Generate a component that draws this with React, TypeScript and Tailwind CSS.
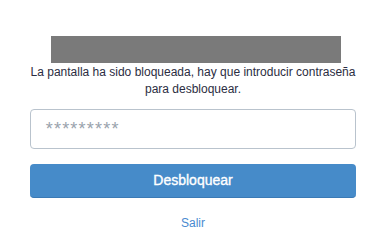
export default function App() {
  return (
    <div className="w-[386px] h-[247px] bg-white flex flex-col px-[30px] pt-[36px]" style={{ fontFamily: '"Liberation Sans", Arial, sans-serif' }}>
      <div className="w-[290px] h-[27px] bg-[#7a7a7a] ml-[21px]" />
      <p className="mt-[1px] text-[12px] leading-[17px] text-[#2b2d42] text-center">
        La pantalla ha sido bloqueada, hay que introducir contraseña para desbloquear.
      </p>
      <input
        type="password"
        placeholder="*********"
        className="mt-[11px] h-[40px] w-full rounded-[4px] border border-[#b9c3cd] px-[14px] text-[18px] tracking-[1.2px] italic placeholder:text-[#9aa3ad] outline-none"
      />
      <button className="mt-[15px] h-[34px] w-full rounded-[4px] bg-[#468bc9] border-b border-[#3b7ab5] text-white text-[14px] [-webkit-text-stroke:0.35px_white]">
        Desbloquear
      </button>
      <div className="mt-[17px] text-center text-[12px] leading-[17px] text-[#4a8ad0]">Salir</div>
    </div>
  );
}
